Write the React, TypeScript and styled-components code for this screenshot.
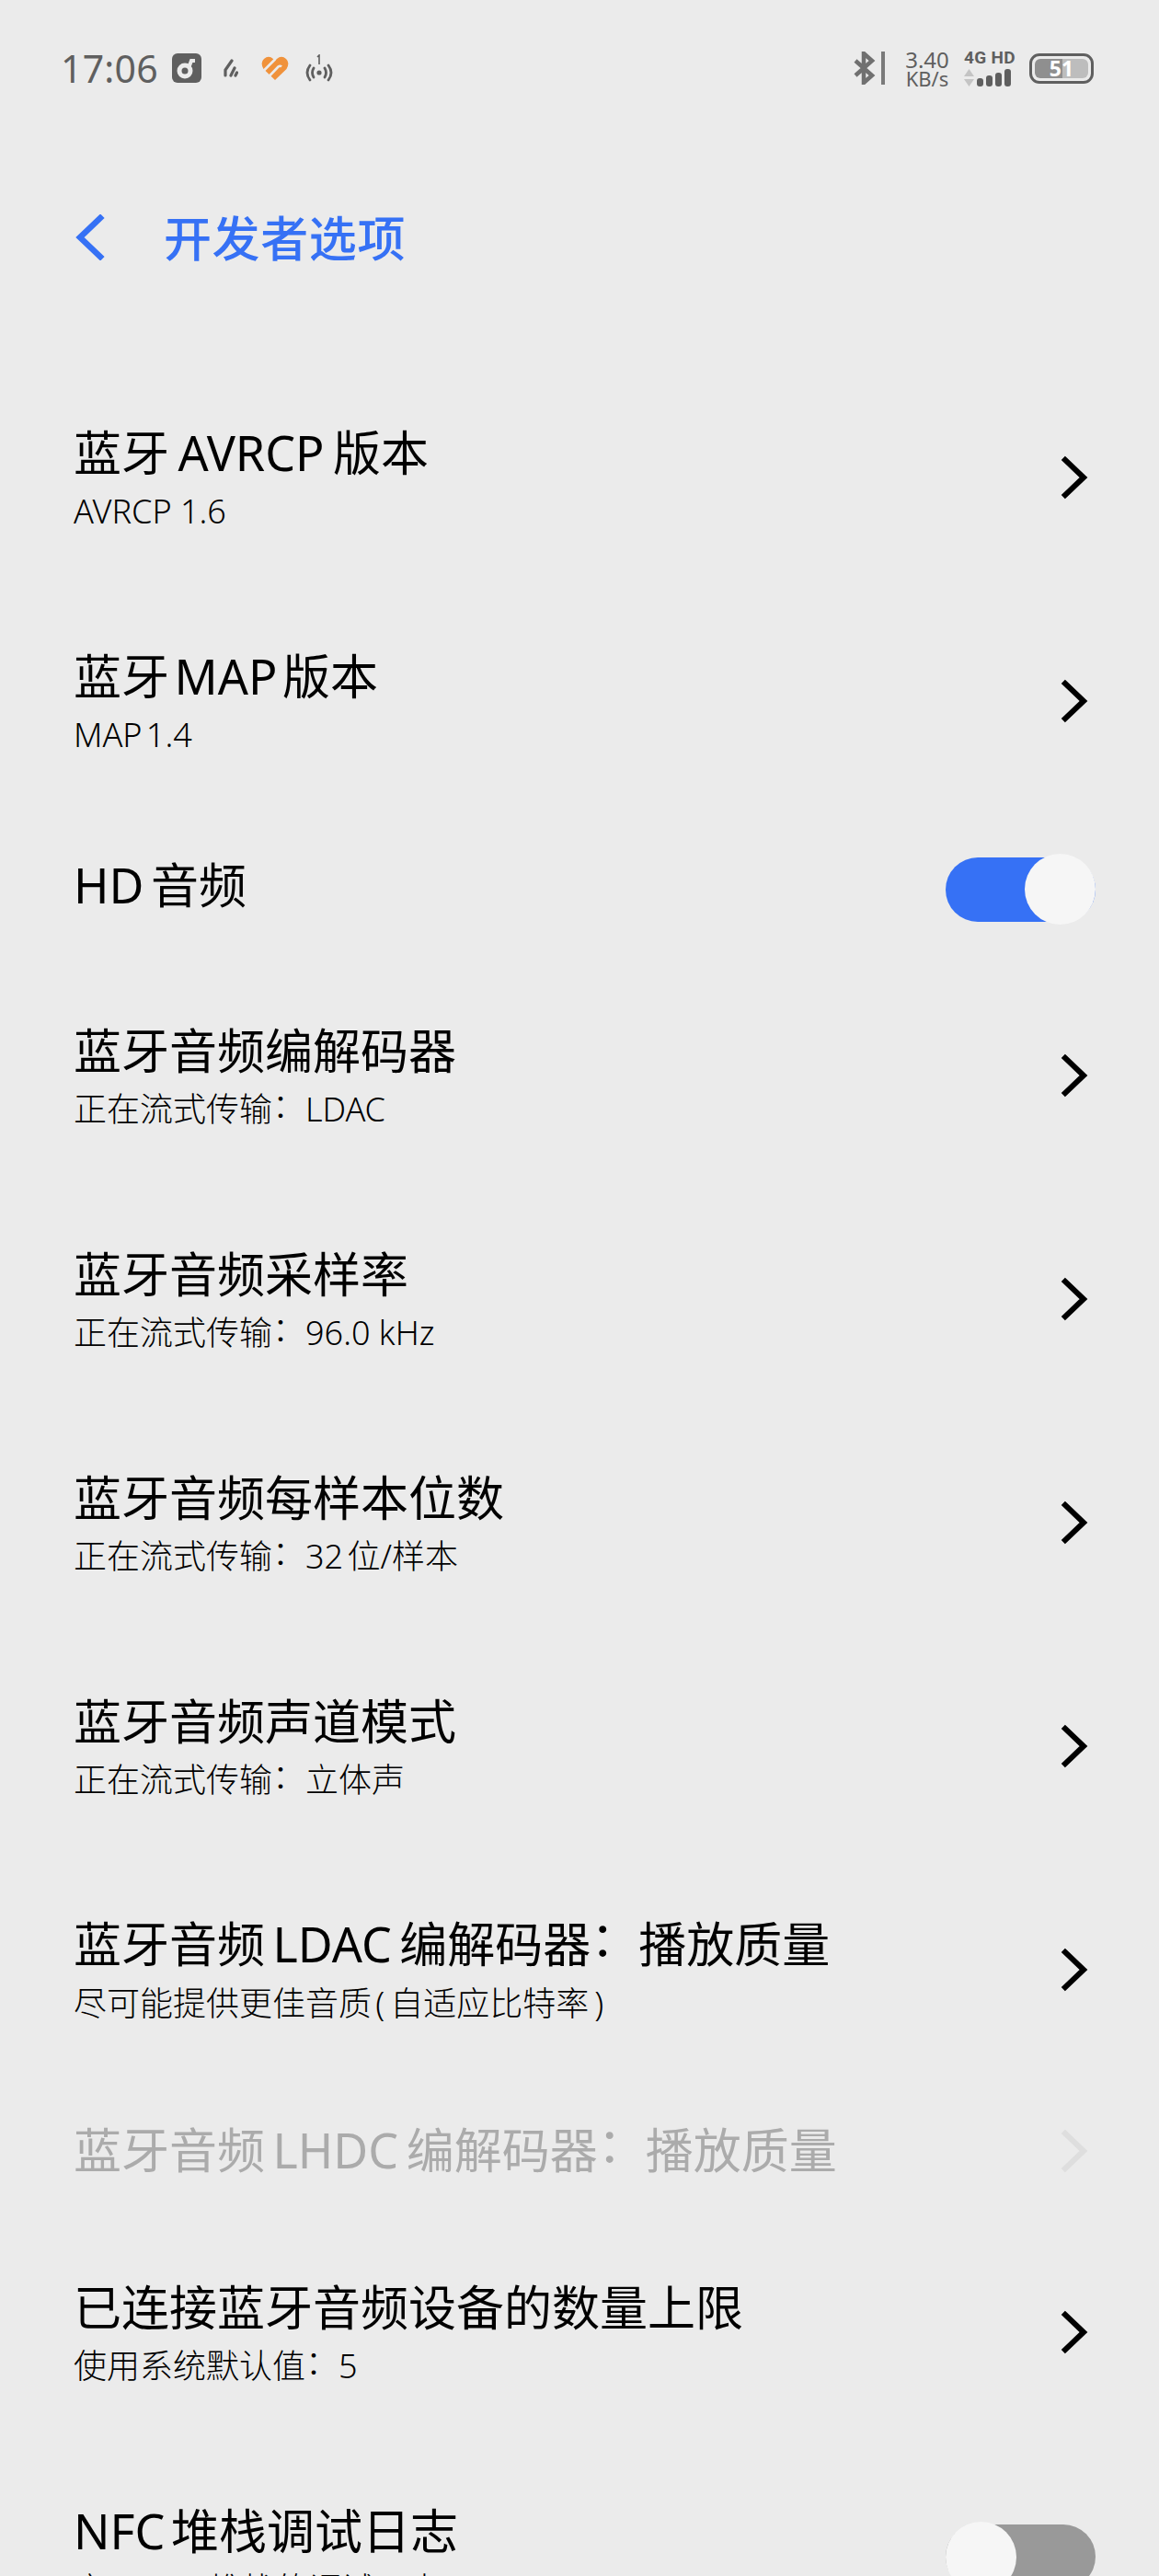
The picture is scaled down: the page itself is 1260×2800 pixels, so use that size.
import React from "react";
import styled, { createGlobalStyle } from "styled-components";

const Global = createGlobalStyle`
  html, body { margin: 0; padding: 0; background: #ebebeb; }
  #root { width: 1260px; height: 2800px; overflow: hidden; }
`;
const FONT = `"Noto Sans", "Noto Sans CJK SC", sans-serif`;

const Page = styled.div`
  width: 1260px; height: 2800px; overflow: hidden; background: #ebebeb;
  font-family: ${FONT}; color: #000;
`;
const StatusBar = styled.div`
  height: 148px; box-sizing: border-box; padding: 55px 71px 0 66px;
  display: flex; justify-content: space-between; align-items: flex-start; color: #5f5f5f;
`;
const StatusGroup = styled.div`display: flex; align-items: center; height: 38px;`;
const Time = styled.span`font-size: 41px; line-height: 38px; width: 121px; letter-spacing: .2px;`;
const Speed = styled.div`
  display: flex; flex-direction: column; align-items: center; width: 56px; margin: 0 12px 0 18px;
`;
const SpeedValue = styled.span`font-size: 24px; line-height: 21px; white-space: nowrap;`;
const SpeedUnit = styled.span`font-size: 22px; line-height: 20px; white-space: nowrap;`;
const NetCol = styled.div`display: flex; flex-direction: column; gap: 4px; width: 58px;`;
const NetLabel = styled.span`font-size: 19px; line-height: 17px; font-weight: 700; white-space: nowrap; font-family: "Roboto", sans-serif; letter-spacing: .3px;`;
const Signal = styled.div`display: flex; align-items: flex-end; gap: 3px; height: 19px;`;
const Bar = styled.i<{ $h: number }>`width: 7px; height: ${p => p.$h}px; background: #5f5f5f; border-radius: 3px; display: block;`;
const Battery = styled.div`
  margin-left: 13px; width: 70px; height: 33px; box-sizing: border-box; border: 3px solid #5f5f5f; border-radius: 11px;
  padding: 3px; display: flex;
`;
const BatteryFill = styled.div`
  flex: 1; border-radius: 6px; background: linear-gradient(90deg, #8f8f8f 51%, #bdbdbd 51%);
  color: #fff; font-size: 23px; line-height: 21px; font-weight: 700; text-align: center;
`;
const Header = styled.div`
  height: 249px; box-sizing: border-box; padding: 0 0 0 80px; display: flex; align-items: flex-start;
`;
const BackIcon = styled.svg`width: 34px; height: 50px; margin-top: 85px; flex: none;`;
const HeaderTitle = styled.h1`
  margin: 79px 0 0 64px; font-size: 52px; line-height: 64px; font-weight: 500; color: #3671f5; letter-spacing: .6px;
`;
const Row = styled.div<{ $h: number }>`
  height: ${p => p.$h}px; box-sizing: border-box; padding: 0 77px 0 80px;
  display: flex; align-items: center; justify-content: space-between;
`;
const SwitchRow = styled(Row)`padding-right: 69px;`;
const Texts = styled.div<{ $offset?: number }>`display: flex; flex-direction: column; margin-top: ${p => p.$offset ?? 0}px;`;
const Title = styled.div<{ $off?: boolean; $lift?: number; $ws?: number }>`
  font-size: 52px; line-height: 64px; white-space: pre; color: ${p => (p.$off ? "#ababab" : "#000")};
  margin-top: ${p => -(p.$lift ?? 0)}px; word-spacing: ${p => p.$ws ?? -4}px;
`;
const Sub = styled.div<{ $ws?: number }>`
  font-size: 36px; line-height: 64px; white-space: pre; color: #000; font-weight: 300; word-spacing: ${p => p.$ws ?? 0}px;
`;
const Colon = styled.span`vertical-align: .12em; line-height: 1;`;
const Chevron = styled.svg`width: 30px; height: 48px; flex: none;`;
const Track = styled.div<{ $on: boolean }>`
  width: 163px; height: 70px; border-radius: 35px; background: ${p => (p.$on ? "#3671f5" : "#999")};
  display: flex; align-items: center; justify-content: ${p => (p.$on ? "flex-end" : "flex-start")};
  margin-top: 3px;
`;
const Knob = styled.div`width: 77px; height: 77px; border-radius: 50%; background: #f6f6f6; flex: none;`;

const Arrow = ({ off }: { off?: boolean }) => (
  <Chevron viewBox="0 0 30 48">
    <path d="M5 5 L25 24 L5 43" fill="none" stroke={off ? "#dedede" : "#000"} strokeWidth="6" strokeLinecap="square" strokeLinejoin="miter" />
  </Chevron>
);

const Rich = ({ text }: { text: string }) => {
  const parts = text.split("：");
  return (
    <>
      {parts.map((p, i) => (
        <React.Fragment key={i}>
          {i > 0 && <Colon>：</Colon>}
          {p}
        </React.Fragment>
      ))}
    </>
  );
};

const Item = ({ t, s, off, ws, sws }: { t: string; s?: string; off?: boolean; ws?: number; sws?: number }) => (
  <Row $h={s ? 243 : 151}>
    <Texts $offset={s ? 10 : 0}>
      <Title $off={off} $ws={ws}><Rich text={t} /></Title>
      {s && <Sub $ws={sws}><Rich text={s} /></Sub>}
    </Texts>
    <Arrow off={off} />
  </Row>
);

const Icon = styled.svg<{ $w: number; $h: number; $ml: number }>`
  width: ${p => p.$w}px; height: ${p => p.$h}px; margin-left: ${p => p.$ml}px; flex: none;
`;

export default function App() {
  return (
    <Page>
      <Global />
      <StatusBar>
        <StatusGroup>
          <Time>17:06</Time>
          <Icon $w={32} $h={32} $ml={0} viewBox="0 0 32 32">
            <rect width="32" height="32" rx="6" fill="#5f5f5f" />
            <circle cx="14" cy="19" r="6" fill="none" stroke="#ebebeb" strokeWidth="5" />
            <path d="M18 16 L21 8 L25 8" fill="none" stroke="#ebebeb" strokeWidth="4" />
          </Icon>
          <Icon $w={16} $h={20} $ml={24} viewBox="0 0 16 20">
            <path d="M2 18 L2 12 L9 2 M8 18 L12 10 M13 18 L14.5 15" fill="none" stroke="#5f5f5f" strokeWidth="3.2" strokeLinecap="round" />
          </Icon>
          <Icon $w={30} $h={26} $ml={25} viewBox="0 0 30 26">
            <path d="M15 26 L2.5 14 Q-1.5 7 3 3 Q8 -1.5 13 3 L15 5 L17 3 Q22 -1.5 27 3 Q31.5 7 27.5 14 Z" fill="#f0923b" />
            <path d="M2 16.5 L15 3.5" fill="none" stroke="#ebebeb" strokeWidth="2.6" />
            <path d="M8 22.5 L18.5 11.5 Q20.5 10 22 11.5" fill="none" stroke="#ebebeb" strokeWidth="2.6" />
          </Icon>
          <Icon $w={32} $h={30} $ml={17} viewBox="0 0 32 30">
            <path d="M6 12 Q0 20 6 28 M26 12 Q32 20 26 28 M10 15 Q7 20 10 25 M22 15 Q25 20 22 25" fill="none" stroke="#5f5f5f" strokeWidth="2.8" strokeLinecap="round" />
            <circle cx="16" cy="20" r="2.6" fill="#5f5f5f" />
            <path d="M14 3 L16 1 L16 11" fill="none" stroke="#5f5f5f" strokeWidth="1.6" />
          </Icon>
        </StatusGroup>
        <StatusGroup>
          <Icon $w={24} $h={36} $ml={0} viewBox="0 0 24 36">
            <path d="M2 10 L20 26 L11 34 L11 2 L20 10 L2 26" fill="none" stroke="#707070" strokeWidth="4.5" />
          </Icon>
          <Icon $w={4} $h={36} $ml={6} viewBox="0 0 4 36">
            <rect width="4" height="36" fill="#7a7a7a" />
          </Icon>
          <Speed><SpeedValue>3.40</SpeedValue><SpeedUnit>KB/s</SpeedUnit></Speed>
          <NetCol>
            <NetLabel>4G HD</NetLabel>
            <Signal>
              <Icon $w={11} $h={19} $ml={0} viewBox="0 0 11 19">
                <path d="M5.5 0 L11 8 L0 8 Z M0 11 L11 11 L5.5 19 Z" fill="#c4c4c4" />
              </Icon>
              <Bar $h={9} /><Bar $h={12} /><Bar $h={15} /><Bar $h={19} />
            </Signal>
          </NetCol>
          <Battery><BatteryFill>51</BatteryFill></Battery>
        </StatusGroup>
      </StatusBar>
      <Header>
        <BackIcon viewBox="0 0 34 50">
          <path d="M29 4 L7 25 L29 46" fill="none" stroke="#3671f5" strokeWidth="6.5" strokeLinecap="square" />
        </BackIcon>
        <HeaderTitle>开发者选项</HeaderTitle>
      </Header>
      <Item t="蓝牙 AVRCP 版本" s="AVRCP 1.6" />
      <Item t="蓝牙 MAP 版本" s="MAP 1.4" ws={-8} sws={-5} />
      <SwitchRow $h={164}>
        <Title $lift={6} $ws={-6}>HD 音频</Title>
        <Track $on><Knob /></Track>
      </SwitchRow>
      <Item t="蓝牙音频编解码器" s="正在流式传输：LDAC" />
      <Item t="蓝牙音频采样率" s="正在流式传输：96.0 kHz" />
      <Item t="蓝牙音频每样本位数" s="正在流式传输：32 位/样本" sws={-5} />
      <Item t="蓝牙音频声道模式" s="正在流式传输：立体声" />
      <Item t="蓝牙音频 LDAC 编解码器：播放质量" ws={-5} s={"尽可能提供更佳音质 (\u2009自适应比特率\u2009)"} sws={-5} />
      <Item t="蓝牙音频 LHDC 编解码器：播放质量" ws={-5} off />
      <Item t="已连接蓝牙音频设备的数量上限" s="使用系统默认值：5" />
      <SwitchRow $h={243}>
        <Texts $offset={10}>
          <Title $ws={-7}>NFC 堆栈调试日志</Title>
          <Sub $ws={-5}>启用 NFC 堆栈的调试日志</Sub>
        </Texts>
        <Track $on={false}><Knob /></Track>
      </SwitchRow>
    </Page>
  );
}
